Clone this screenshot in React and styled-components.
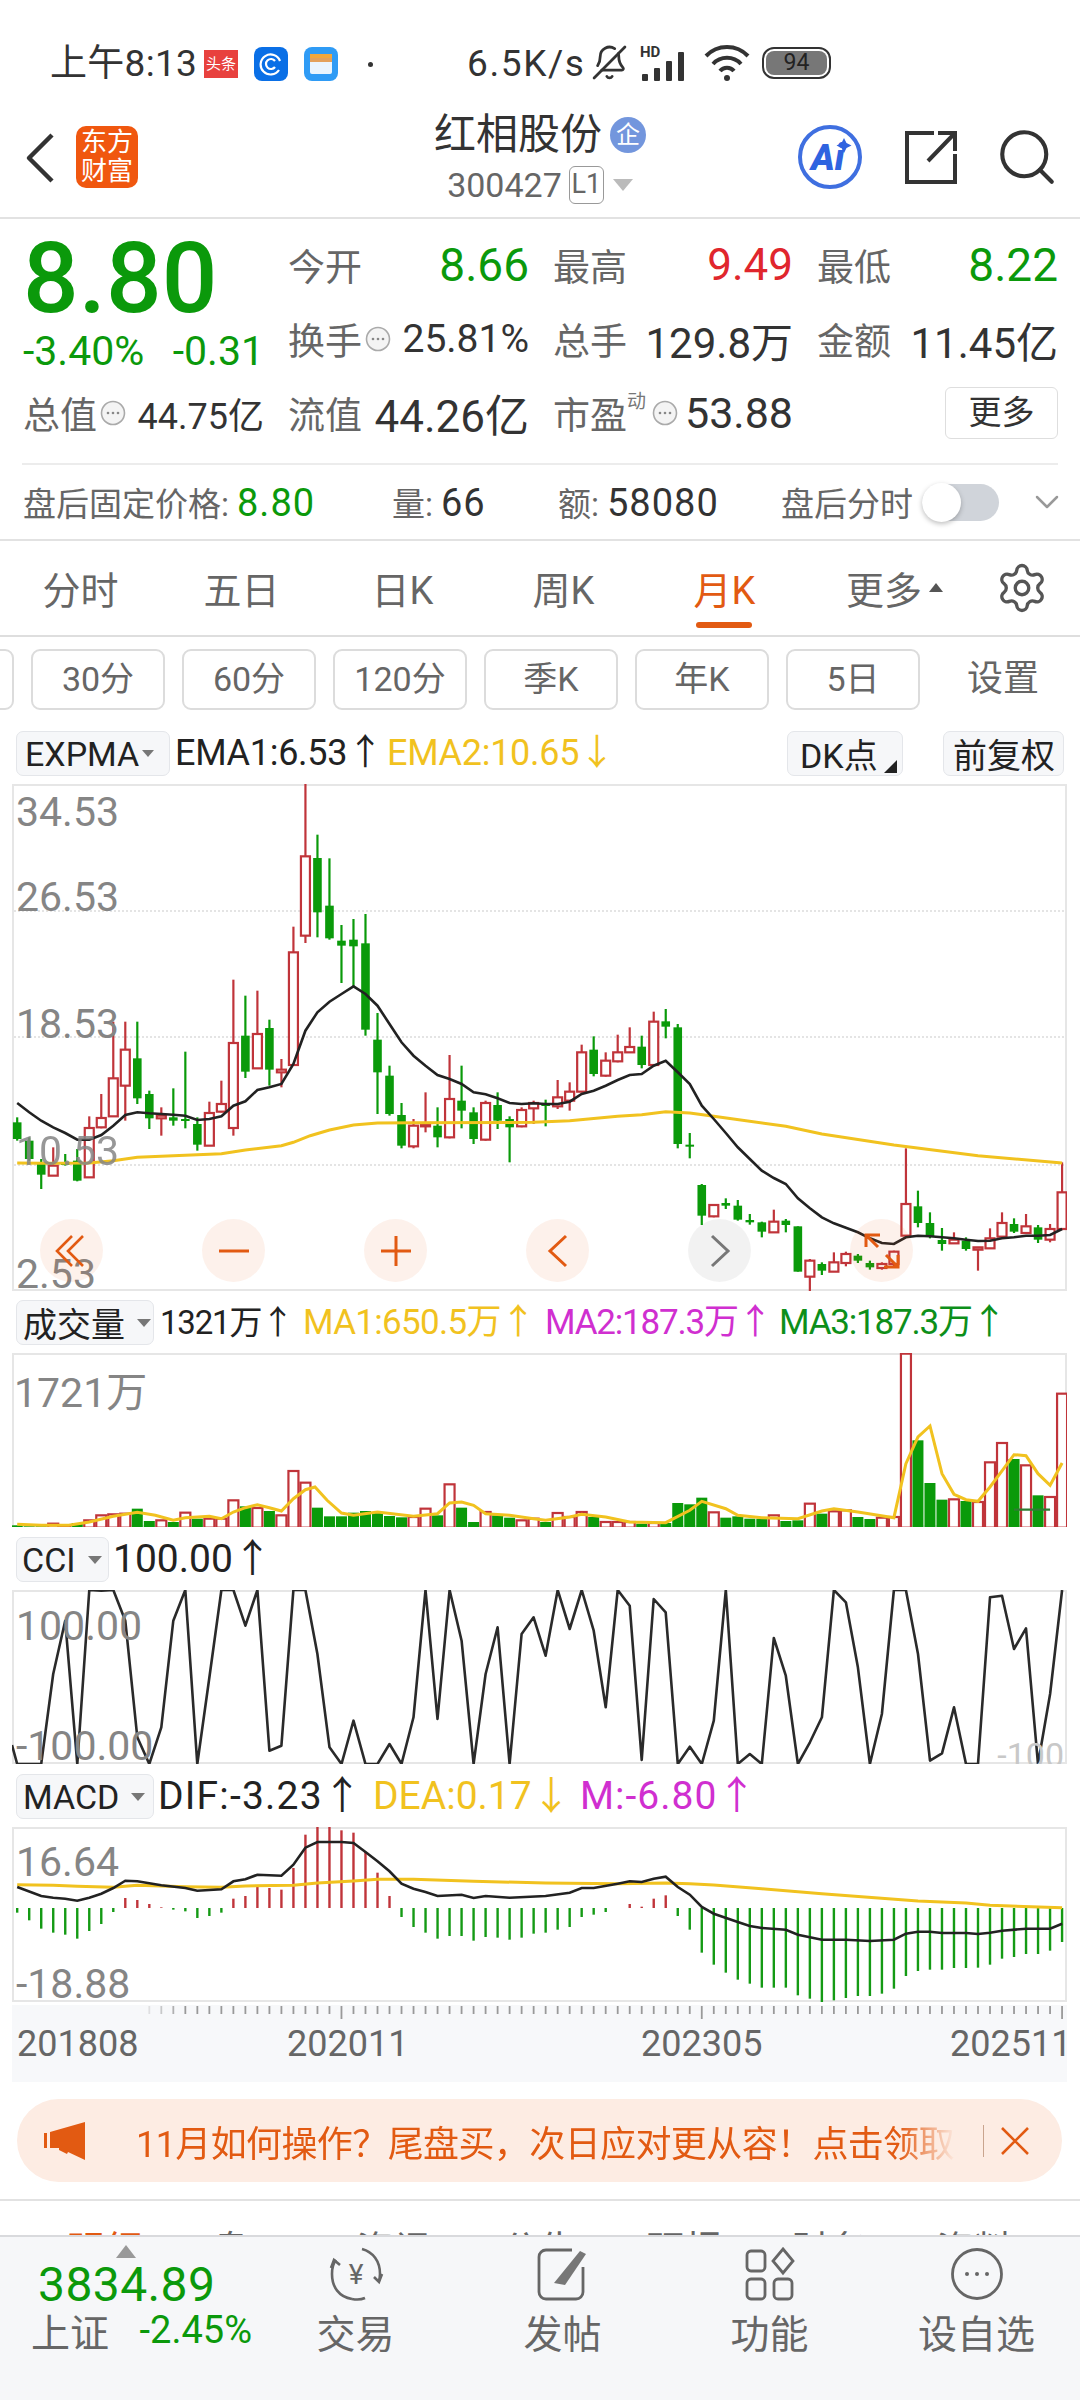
import React from 'react';
import styled, { createGlobalStyle } from 'styled-components';
import { BellOff, Search, Settings, ChevronDown } from 'lucide-react';

const sans = `Roboto, "Noto Sans CJK SC", sans-serif`;
const GREEN = '#0b990b';
const RED = '#e0262d';
const ORANGE = '#e25a12';
const CANDLE_RED = '#c0343a';
const CANDLE_GREEN = '#0a9a0a';
const YELLOW = '#f1c21f';
const MAGENTA = '#d02fd0';

const PROMO_TEXT = '11月如何操作\uFF1F尾盘买\uFF0C次日应对更从容\uFF01点击领取';

// series are sampled on a 3x grid, so every y below is three times a pixel
const slotX = (i) => 5.2 + 12.01 * i;
const toY = (top) => (v) => (v - top) / 3;
const linePoints = (values, top) =>
    values.map((v, i) => `${slotX(i).toFixed(1)},${toY(top)(v).toFixed(1)}`).join(' ');
const pairPoints = (pairs, top) =>
    pairs.map(([i, v]) => `${slotX(i).toFixed(1)},${toY(top)(v).toFixed(1)}`).join(' ');

// colour, wick top, body top, body bottom, wick bottom
const candles = [
    ['g', 1015, 1030, 1080, 1085], ['g', 1075, 1085, 1140, 1145], ['g', 1140, 1150, 1187, 1230], ['r', 1105, 1160, 1190, 1190],
    ['g', 1125, 1150, 1158, 1160], ['g', 1110, 1145, 1205, 1207], ['r', 1012, 1047, 1195, 1195], ['r', 945, 1017, 1045, 1048],
    ['r', 728, 898, 1012, 1013], ['r', 728, 812, 920, 1025], ['g', 728, 838, 958, 975], ['g', 935, 945, 1018, 1050],
    ['r', 985, 1010, 1018, 1070], ['g', 928, 1015, 1025, 1040], ['g', 818, 1020, 1026, 1048], ['g', 1015, 1035, 1097, 1115],
    ['r', 968, 1002, 1100, 1100], ['r', 905, 975, 998, 1000], ['r', 602, 792, 1047, 1070], ['g', 650, 770, 878, 897],
    ['r', 635, 765, 868, 870], ['g', 722, 747, 872, 920], ['r', 840, 872, 880, 925], ['r', 443, 520, 858, 860],
    ['r', 15, 232, 470, 492], ['g', 167, 237, 400, 475], ['g', 238, 380, 478, 482], ['g', 438, 485, 500, 612],
    ['g', 420, 482, 502, 622], ['g', 405, 493, 752, 770], ['g', 702, 782, 880, 1005], ['g', 860, 890, 1005, 1010],
    ['g', 972, 1008, 1100, 1108], ['r', 1020, 1040, 1102, 1108], ['r', 940, 1037, 1042, 1060], ['g', 985, 1040, 1075, 1105],
    ['r', 828, 960, 1075, 1078], ['g', 860, 965, 995, 1048], ['g', 985, 1000, 1080, 1095], ['r', 965, 972, 1082, 1085],
    ['g', 940, 978, 1025, 1050], ['g', 1012, 1020, 1045, 1150], ['r', 985, 993, 1042, 1045], ['r', 965, 972, 988, 1035],
    ['g', 962, 975, 980, 1042], ['r', 903, 955, 982, 990], ['r', 910, 938, 965, 995], ['r', 797, 820, 938, 940],
    ['g', 772, 812, 885, 892], ['r', 820, 845, 890, 893], ['r', 767, 820, 847, 850], ['r', 745, 804, 820, 822],
    ['g', 770, 803, 858, 868], ['r', 698, 728, 858, 860], ['g', 690, 727, 743, 778], ['g', 735, 745, 1095, 1108],
    ['g', 1062, 1097, 1103, 1138], ['g', 1215, 1218, 1310, 1338], ['r', 1275, 1278, 1312, 1315], ['g', 1258, 1272, 1280, 1290],
    ['g', 1263, 1280, 1322, 1325], ['g', 1305, 1323, 1330, 1337], ['g', 1328, 1330, 1358, 1375], ['r', 1292, 1328, 1360, 1360],
    ['g', 1320, 1325, 1338, 1360], ['g', 1342, 1342, 1478, 1478], ['r', 1440, 1445, 1493, 1538], ['g', 1450, 1455, 1475, 1488],
    ['r', 1420, 1450, 1478, 1478], ['r', 1418, 1425, 1452, 1462], ['g', 1425, 1430, 1445, 1452], ['g', 1445, 1452, 1465, 1472],
    ['r', 1450, 1455, 1467, 1472], ['r', 1415, 1418, 1455, 1465], ['r', 1108, 1275, 1370, 1370], ['g', 1235, 1282, 1332, 1345],
    ['g', 1300, 1332, 1372, 1378], ['g', 1347, 1383, 1395, 1415], ['r', 1360, 1382, 1393, 1395], ['g', 1375, 1385, 1410, 1415],
    ['r', 1405, 1405, 1412, 1475], ['r', 1348, 1378, 1408, 1408], ['r', 1300, 1332, 1373, 1375], ['g', 1318, 1335, 1358, 1362],
    ['r', 1305, 1342, 1362, 1362], ['g', 1338, 1345, 1382, 1392], ['r', 1335, 1350, 1382, 1390], ['r', 1150, 1240, 1350, 1350],
];

const ema1 = [
    972, 1000, 1025, 1045, 1062, 1082, 1082, 1068, 1040, 1008, 1000, 1003, 1005, 1007, 1010, 1023, 1020, 1012, 980, 967, 933, 925,
    915, 855, 755, 700, 668, 645, 622, 645, 680, 735, 790, 830, 860, 888, 900, 915, 940, 946, 958, 972, 975, 973,
    975, 975, 968, 945, 935, 920, 903, 888, 885, 860, 845, 880, 915, 980, 1020, 1062, 1105, 1140, 1175, 1197, 1215, 1258,
    1288, 1315, 1333, 1346, 1360, 1378, 1392, 1395, 1375, 1370, 1372, 1375, 1378, 1382, 1386, 1385, 1378, 1375, 1370, 1370, 1368, 1350,
];

const ema2 = [
    [0, 1152], [2, 1153], [6, 1152], [8, 1145], [10, 1135], [13, 1130], [17, 1124], [19, 1113], [22, 1100], [23, 1090], [24.4, 1070],
    [26, 1053], [28, 1038], [30, 1032], [33, 1031], [43, 1030], [46, 1025], [50, 1012], [52, 1007], [54, 998], [56, 1002], [58, 1012],
    [64, 1042], [67, 1065], [73, 1098], [80, 1130], [87, 1152],
];

const volumes = [
    ['g', 675], ['g', 678], ['g', 678], ['r', 670], ['r', 678], ['g', 668], ['r', 660], ['r', 645], ['r', 642], ['r', 640], ['g', 625],
    ['g', 662], ['r', 660], ['g', 665], ['r', 637], ['g', 655], ['r', 655], ['r', 655], ['r', 600], ['g', 618], ['r', 623], ['g', 632],
    ['r', 645], ['r', 512], ['r', 547], ['g', 622], ['g', 648], ['g', 648], ['g', 637], ['g', 632], ['g', 638], ['g', 647], ['g', 651],
    ['r', 650], ['r', 625], ['g', 645], ['r', 552], ['g', 622], ['g', 665], ['r', 635], ['g', 645], ['g', 652], ['r', 660], ['r', 655],
    ['g', 665], ['r', 638], ['r', 650], ['r', 635], ['g', 650], ['r', 665], ['r', 665], ['r', 665], ['g', 670], ['r', 668], ['g', 668],
    ['g', 608], ['g', 612], ['g', 592], ['r', 636], ['g', 652], ['g', 648], ['g', 655], ['g', 655], ['r', 645], ['g', 662], ['g', 660],
    ['r', 610], ['g', 640], ['r', 633], ['r', 630], ['g', 650], ['g', 656], ['r', 652], ['r', 650], ['r', 160], ['g', 420], ['g', 548],
    ['g', 598], ['r', 597], ['g', 602], ['r', 605], ['r', 486], ['r', 428], ['g', 476], ['r', 495], ['g', 585], ['r', 590], ['r', 280],
];

const volumeAverage = [
    [0, 672], [2, 675], [4.3, 675], [6, 665], [8, 648], [10, 636], [11.5, 645], [13, 660], [14, 652], [16, 648], [17, 655], [18, 635],
    [19, 622], [20, 613], [21, 622], [22, 632], [23, 595], [24, 568], [24.8, 560], [25.8, 600], [27, 638], [28, 645], [30, 635], [33, 648],
    [35, 640], [36, 608], [37, 605], [38, 615], [39, 640], [41, 645], [43, 655], [44, 660], [46, 650], [47, 642], [49, 650], [51, 665],
    [54, 667], [56, 630], [57, 603], [59, 625], [60, 645], [62, 652], [65, 655], [67, 632], [68, 625], [70, 635], [73, 652], [74, 490],
    [75, 410], [76, 377], [77, 520], [78, 582], [79, 598], [80, 603], [81, 560], [83, 463], [84, 466], [85, 520], [86, 555], [87, 488],
];

const cci = [
    1390, 1390, 1390, 1120, 960, 1390, 868, 870, 868, 960, 1310, 1390, 1280, 960, 868, 1390, 1130, 868, 868, 975, 868, 1350, 1335, 868,
    868, 1060, 1340, 1390, 1260, 1390, 1390, 1330, 1390, 1250, 868, 1255, 868, 1020, 1390, 1120, 980, 1390, 1000, 950,
    1065, 868, 985, 868, 990, 1220, 868, 915, 1378, 895, 935, 1390, 1338, 1390, 1260, 868, 1390, 1360, 1390, 1012, 1125, 1390, 1325,
    1250, 868, 905, 1100, 1390, 1240, 868, 868, 1060, 1380, 1358, 1220, 1390, 1390, 890, 885, 1045, 983, 1390, 1180, 868,
];

const macdBars = [
    392, 415, 440, 452, 458, 470, 447, 426, 390, 348, 354, 366, 376, 383, 388, 408, 402, 392, 350, 342, 315, 318, 323, 258, 158, 135,
    135, 145, 152, 210, 272, 342, 405, 435, 452, 470, 462, 462, 476, 465, 467, 473, 467, 455,
    452, 443, 435, 405, 398, 390, 378, 366, 374, 350, 340, 402, 443, 512, 548, 572, 593, 605, 617, 617, 617, 640, 650, 660, 655, 648,
    642, 642, 635, 620, 582, 567, 563, 563, 558, 558, 557, 548, 530, 525, 516, 516, 506, 480,
];

const dif = [
    [0, 315], [2, 342], [3, 347], [4, 350], [5, 356], [6, 347], [7, 335], [8, 318], [9, 296], [10, 298], [12, 310], [14, 318], [15, 326],
    [17, 322], [18, 298], [19, 292], [20, 278], [21, 280], [22, 281], [23, 248], [24, 197], [25, 180], [27, 180], [28, 183], [29, 210],
    [30, 238], [31, 268], [32, 305], [33, 320], [34, 330], [35, 342], [37, 338], [38, 348], [39, 342], [41, 347], [44, 342], [46, 332],
    [47, 318], [48, 318], [50, 305], [51, 298], [52, 300], [53, 290], [54, 284], [55, 315], [56, 338], [57, 375], [58, 395], [60, 420],
    [61, 432], [62, 438], [64, 443], [65, 458], [67, 473], [69, 473], [71, 477], [73, 473], [74, 455], [75, 449], [76, 449], [77, 453],
    [79, 453], [80, 456], [81, 452], [82, 446], [84, 440], [86, 440], [87, 425],
];

const dea = [
    [0, 308], [3, 310], [5, 313], [8, 316], [10, 310], [14, 314], [17, 316], [19, 312], [23, 310], [25, 303], [28, 297], [30, 292], [33, 292],
    [38, 298], [44, 303], [50, 305], [54, 303], [56, 305], [58, 309], [62, 320], [67, 335], [75, 357], [79, 363], [81, 370], [87, 377],
];

const GlobalStyle = createGlobalStyle`
    html, body { margin: 0; padding: 0; background: #fff; }
    * { box-sizing: border-box; }
`;

const Page = styled.div`
    width: 1080px;
    height: 2400px;
    display: flex;
    flex-direction: column;
    overflow: hidden;
    background: #fff;
    font-family: ${sans};
    color: #222;
`;

const Main = styled.div`
    height: 2235px;
    flex: none;
    overflow: hidden;
`;

const StatusBar = styled.div`
    height: 100px;
    padding: 44px 0 0 50px;
    display: flex;
    align-items: flex-start;
    color: #333;
`;

const StatusText = styled.span`
    font-size: 37px;
    line-height: 40px;
    white-space: nowrap;
    letter-spacing: ${(p) => p.$spacing || 0}px;
    width: ${(p) => p.$width}px;
    flex: none;
`;

const NewsBadge = styled.span`
    width: 34px;
    height: 28px;
    margin: 6px 16px 0 7px;
    background: #e8413e;
    color: #fff;
    font-size: 15px;
    line-height: 28px;
    text-align: center;
    flex: none;
`;

const AppTile = styled.span`
    width: 34px;
    height: 34px;
    margin: 3px ${(p) => p.$after}px 0 0;
    border-radius: 8px;
    background: ${(p) => p.$bg};
    flex: none;
    display: flex;
    align-items: center;
    justify-content: center;
`;

const StatusDot = styled.span`
    width: 5px;
    height: 5px;
    margin: 18px 94px 0 0;
    border-radius: 50%;
    background: #333;
    flex: none;
`;

const MirroredBell = styled(BellOff)`
    flex: none;
    transform: scaleX(-1);
`;

const Battery = styled.span`
    width: 69px;
    height: 32px;
    margin: 3px 0 0 12px;
    border: 2px solid #333;
    border-radius: 12px;
    padding: 2px;
    display: flex;
    flex: none;
`;

const BatteryLevel = styled.span`
    flex: 1;
    border-radius: 8px;
    background: #777;
    color: #222;
    font-size: 23px;
    line-height: 24px;
    text-align: center;
`;

const Header = styled.div`
    height: 119px;
    display: grid;
    grid-template-columns: 1fr auto 1fr;
    border-bottom: 2px solid #e2e2e2;
`;

const HeaderLeft = styled.div`
    display: flex;
    align-items: flex-start;
    padding: 26px 0 0 25px;
    gap: 21px;
`;

const Logo = styled.div`
    width: 62px;
    height: 62px;
    border-radius: 10px;
    background: #f0570f;
    color: #fff;
    font-size: 26px;
    line-height: 29px;
    text-align: center;
    padding-top: 2px;
`;

const TitleBlock = styled.div`
    display: flex;
    flex-direction: column;
    align-items: center;
    padding-top: 12px;
`;

const TitleRow = styled.div`
    display: flex;
    align-items: center;
    gap: 8px;
`;

const Title = styled.div`
    font-size: 42px;
    line-height: 46px;
    color: #333;
`;

const FirmBadge = styled.span`
    width: 36px;
    height: 36px;
    border-radius: 50%;
    background: #7396dd;
    color: #fff;
    font-size: 24px;
    line-height: 36px;
    text-align: center;
`;

const CodeRow = styled.div`
    display: flex;
    align-items: center;
    margin-top: 8px;
    color: #666;
    font-size: 34px;
    line-height: 38px;
`;

const LevelTag = styled.span`
    height: 38px;
    width: 35px;
    margin-left: 7px;
    border: 1.5px solid #999;
    border-radius: 6px;
    font-size: 27px;
    line-height: 35px;
    text-align: center;
`;

const Caret = styled.span`
    width: 0;
    height: 0;
    border-left: ${(p) => p.$size}px solid transparent;
    border-right: ${(p) => p.$size}px solid transparent;
    border-top: ${(p) => p.$size * 1.2}px solid ${(p) => p.$color};
    margin-left: ${(p) => p.$gap}px;
    flex: none;
`;

const CaretUp = styled(Caret)`
    border-top: 0;
    border-bottom: ${(p) => p.$size * 1.3}px solid ${(p) => p.$color};
`;

const HeaderRight = styled.div`
    display: flex;
    justify-content: flex-end;
    align-items: center;
    padding: 0 20px 4px 0;
    gap: 43px;
`;

const SearchIcon = styled(Search)`
    margin-left: -6px;
`;

const QuoteGrid = styled.div`
    padding: 9px 22px 0 23px;
    display: grid;
    grid-template-columns: 241px 241px 240px 241px;
    grid-auto-rows: 74px;
    column-gap: 24px;
`;

const PriceCell = styled.div`
    font-size: 98px;
    line-height: 98px;
    color: ${GREEN};
    font-weight: 500;
    align-self: start;
    margin-top: 2px;
    white-space: nowrap;
`;

const ChangeCell = styled.div`
    display: flex;
    justify-content: space-between;
    align-items: center;
    font-size: 41px;
    color: ${GREEN};
    padding-top: 24px;
`;

const Stat = styled.div`
    display: flex;
    align-items: center;
`;

const StatLabel = styled.span`
    font-size: 37px;
    color: #666;
    flex: none;
`;

const StatValue = styled.span`
    margin-left: auto;
    font-size: ${(p) => p.$size || 46}px;
    color: ${(p) => p.$color || '#333'};
    white-space: nowrap;
`;

const Superscript = styled.span`
    font-size: 19px;
    color: #777;
    align-self: flex-start;
    margin-top: 10px;
    width: 22px;
    flex: none;
`;

const MoreButton = styled.div`
    justify-self: end;
    align-self: center;
    width: 113px;
    height: 52px;
    border: 1px solid #dedede;
    border-radius: 6px;
    font-size: 33px;
    line-height: 50px;
    text-align: center;
    color: #333;
`;

const ThinRule = styled.div`
    margin: 13px 22px 0;
    height: 2px;
    background: #ececec;
`;

const AfterHours = styled.div`
    height: 76px;
    padding-left: 23px;
    display: grid;
    grid-template-columns: 369px 166px 223px 141px 105px auto;
    align-items: center;
    border-bottom: 2px solid #e2e2e2;
    font-size: 33px;
    color: #666;
`;

const AfterValue = styled.span`
    color: ${(p) => p.$color || '#333'};
    font-size: 38px;
    letter-spacing: 1px;
    margin-left: 8px;
`;

const NoWrap = styled.span`
    white-space: nowrap;
`;

const Toggle = styled.div`
    width: 77px;
    height: 37px;
    border-radius: 19px;
    background: #d0d4da;
    position: relative;
`;

const ToggleKnob = styled.div`
    position: absolute;
    left: 0;
    top: -1px;
    width: 39px;
    height: 39px;
    border-radius: 50%;
    background: #fff;
    box-shadow: 0 2px 5px rgba(0, 0, 0, 0.25);
`;

const TabBar = styled.div`
    height: 96px;
    display: grid;
    grid-template-columns: repeat(6, 161px) auto;
    align-items: center;
    border-bottom: 2px solid #dedede;
`;

const Tab = styled.div`
    position: relative;
    height: 94px;
    display: flex;
    align-items: center;
    justify-content: center;
    font-size: 38px;
    padding-bottom: 2px;
    padding-left: ${(p) => p.$shift || 0}px;
    color: ${(p) => (p.$active ? ORANGE : '#666')};

    ${(p) => p.$active && `
        &::after {
            content: '';
            position: absolute;
            left: 52px;
            bottom: 7px;
            width: 56px;
            height: 6px;
            border-radius: 3px;
            background: ${ORANGE};
        }
    `}
`;

const GearIcon = styled(Settings)`
    margin-left: 29px;
`;

const IntervalRow = styled.div`
    margin: 12px 0 0 -120px;
    height: 61px;
    display: flex;
    gap: 17px;
`;

const IntervalButton = styled.div`
    width: 134px;
    height: 61px;
    flex: none;
    border: 2px solid #dcdcdc;
    border-radius: 9px;
    font-size: 34px;
    line-height: 57px;
    text-align: center;
    color: #666;
`;

const IntervalLink = styled.div`
    font-size: 36px;
    line-height: 61px;
    color: #666;
    margin-left: 30px;
    white-space: nowrap;
`;

const IndicatorRow = styled.div`
    height: 45px;
    margin: ${(p) => p.$top}px 0 8px;
    padding-left: 16px;
    display: flex;
    align-items: center;
    white-space: nowrap;
`;

const Selector = styled.div`
    width: ${(p) => p.$width}px;
    height: 45px;
    flex: none;
    display: flex;
    align-items: center;
    padding-left: ${(p) => p.$inset || 8}px;
    background: #f6f7f9;
    border: 1px solid #e4e6ea;
    border-radius: 7px;
    font-size: 34px;
    color: #222;
`;

const Reading = styled.span`
    flex: none;
    width: ${(p) => (p.$width ? `${p.$width}px` : 'auto')};
    font-size: ${(p) => p.$size}px;
    letter-spacing: ${(p) => p.$spacing || 0}px;
    line-height: 45px;
    color: ${(p) => p.$color || '#222'};
    margin-left: ${(p) => p.$gap || 0}px;
`;

const RowPush = styled.div`
    margin-left: auto;
    display: flex;
    gap: 40px;
    padding-right: 16px;
`;

const SmallCorner = styled.span`
    width: 0;
    height: 0;
    margin: 26px 0 0 6px;
    border-left: 13px solid transparent;
    border-bottom: 13px solid #222;
`;

const ChartFrame = styled.div`
    position: relative;
    margin-left: 12px;
    width: 1055px;
    height: ${(p) => p.$height}px;
    box-shadow: inset 0 0 0 2px #e6e6e6;

    svg { display: block; }
`;

const ScaleLabel = styled.text`
    font-family: ${sans};
    font-size: ${(p) => p.$size || 41}px;
    fill: ${(p) => p.$fill || '#858585'};
    dominant-baseline: central;
`;

const ZoomControls = styled.div`
    position: absolute;
    left: 28px;
    top: 435px;
    display: flex;
    gap: 99px;
`;

const ZoomButton = styled.div`
    width: 63px;
    height: 63px;
    border-radius: 50%;
    background: ${(p) => (p.$muted ? 'rgba(0, 0, 0, 0.05)' : 'rgba(236, 100, 30, 0.09)')};
    display: flex;
    align-items: center;
    justify-content: center;
`;

const AxisStrip = styled.div`
    margin: 3px 0 0 12px;
    width: 1055px;
    height: 77px;
    background: #f7f8fa;

    svg { display: block; }
`;

const AxisLabels = styled.div`
    margin-top: 1px;
    padding-left: 5px;
    display: grid;
    grid-template-columns: 270px 354px 309px auto;
    font-size: 36px;
    line-height: 44px;
    color: #666;
`;

const Banner = styled.div`
    margin: 17px 18px 0 17px;
    height: 83px;
    border-radius: 42px;
    background: #fdece3;
    display: flex;
    align-items: center;
    padding-left: 27px;
    color: ${ORANGE};
`;

const BannerText = styled.div`
    width: 820px;
    margin-left: 50px;
    flex: none;
    overflow: hidden;
    white-space: nowrap;
    font-size: 36px;
    letter-spacing: -0.6px;
    -webkit-mask-image: linear-gradient(to right, #000 93%, transparent);
    mask-image: linear-gradient(to right, #000 93%, transparent);
`;

const BannerDivider = styled.div`
    width: 1px;
    height: 32px;
    margin: 0 16px 0 27px;
    background: #c9a48e;
    flex: none;
`;

const LowerTabs = styled.div`
    margin-top: 17px;
    border-top: 2px solid #e2e2e2;
    padding: 27px 0 0 32px;
    display: grid;
    grid-template-columns: repeat(7, 145px);
`;

const LowerTab = styled.div`
    font-size: 38px;
    line-height: 44px;
    text-align: center;
    color: ${(p) => (p.$active ? ORANGE : '#666')};
`;

const BottomBar = styled.div`
    flex: 1;
    background: #f6f7f9;
    border-top: 2px solid #d9dadd;
    display: grid;
    grid-template-columns: 252px repeat(4, 207px);
`;

const IndexBlock = styled.div`
    padding: 8px 0 0 31px;
`;

const IndexCaret = styled(CaretUp)`
    display: block;
    margin-left: 85px;
`;

const IndexValue = styled.div`
    margin: 4px 0 0 7px;
    font-size: 48px;
    line-height: 46px;
    color: ${GREEN};
    letter-spacing: 0.4px;
`;

const IndexRow = styled.div`
    display: flex;
    align-items: center;
    height: 44px;
`;

const IndexName = styled.span`
    font-size: 39px;
    color: #666;
    width: 109px;
`;

const IndexChange = styled.span`
    font-size: 38px;
    color: ${GREEN};
`;

const BarItem = styled.div`
    display: flex;
    flex-direction: column;
    align-items: center;
    padding-top: 10px;
`;

const BarLabel = styled.span`
    margin-top: 13px;
    font-size: 39px;
    line-height: 42px;
    color: #666;
`;

const DotsGlyph = styled.svg`
    margin-left: 3px;
    flex: none;
`;

const Dots = () => (
    <DotsGlyph width="26" height="26" viewBox="0 0 26 26">
        <circle cx="13" cy="13" r="11.5" fill="#f4f4f4" stroke="#aaa" strokeWidth="1.6" />
        <circle cx="8" cy="13" r="1.3" fill="#888" />
        <circle cx="13" cy="13" r="1.3" fill="#888" />
        <circle cx="18" cy="13" r="1.3" fill="#888" />
    </DotsGlyph>
);

const BackGlyph = styled.svg`
    margin-top: 7px;
`;

const BackIcon = () => (
    <BackGlyph width="30" height="50" viewBox="0 0 30 50">
        <polyline points="27,2 4,25 27,48" fill="none" stroke="#333" strokeWidth="4.5" strokeLinejoin="round" />
    </BackGlyph>
);

const AiIcon = () => (
    <svg width="64" height="66" viewBox="0 0 64 66">
        <circle cx="32" cy="33" r="30" fill="#fff" stroke="#3f6fe0" strokeWidth="4" />
        <text x="13" y="46" fontFamily="Roboto, sans-serif" fontWeight="900" fontStyle="italic" fontSize="36" fill="#2f63e0">Ai</text>
        <path d="M46 14l2.5 5 5 2.5-5 2.5-2.5 5-2.5-5-5-2.5 5-2.5z" fill="#2f63e0" />
    </svg>
);

const ShareIcon = () => (
    <svg width="52" height="54" viewBox="0 0 52 54" fill="none" stroke="#333" strokeWidth="4">
        <path d="M29 3H2v49h48V24" />
        <path d="M23 31L50 3M33 3h17v18" />
    </svg>
);

const Megaphone = () => (
    <svg width="42" height="38" viewBox="0 0 42 38">
        <rect x="0" y="11" width="3" height="15" fill={ORANGE} />
        <path d="M6 10L41 0v38L24 30l-1 2-8-4v-2H6z" fill={ORANGE} />
    </svg>
);

const TradeIcon = () => (
    <svg width="60" height="54" viewBox="0 0 60 54" fill="none" stroke="#666" strokeWidth="2.6">
        <path d="M36 2C47 5 54 14 54 27c0 3-.5 6-1.6 8" />
        <path d="M26 52C13 50 6 40 6 27c0-6 1.5-11 4-14" />
        <path d="M5 21l3-8 6 5M56 27l-3 8-5-5" />
        <path d="M26 52c4 .8 9 .8 13-1" />
        <text x="30" y="37" textAnchor="middle" fontFamily="Roboto, sans-serif" fontSize="28" fill="#666" stroke="none">¥</text>
    </svg>
);

const PostIcon = () => (
    <svg width="54" height="54" viewBox="0 0 54 54" fill="none" stroke="#666" strokeWidth="2.8">
        <path d="M36 3H10a7 7 0 0 0-7 7v35a7 7 0 0 0 7 7h30a7 7 0 0 0 7-7V20" />
        <path d="M18 36L44 4l6 3-21 31z" fill="#777" stroke="none" />
    </svg>
);

const ToolsIcon = () => (
    <svg width="50" height="54" viewBox="0 0 50 54" fill="none" stroke="#666" strokeWidth="2.8">
        <rect x="2" y="4" width="18" height="20" rx="4" />
        <rect x="2" y="32" width="18" height="20" rx="4" />
        <rect x="29" y="32" width="18" height="20" rx="4" />
        <path d="M38 2l10 12-10 12-10-12z" />
    </svg>
);

const MoreIcon = () => (
    <svg width="54" height="54" viewBox="0 0 54 54" fill="none">
        <circle cx="27" cy="27" r="24.5" stroke="#666" strokeWidth="2.8" />
        <circle cx="17" cy="27" r="2" fill="#666" />
        <circle cx="27" cy="27" r="2" fill="#666" />
        <circle cx="37" cy="27" r="2" fill="#666" />
    </svg>
);

const Glyph = ({ color = ORANGE, children }) => (
    <svg width="36" height="36" viewBox="0 0 36 36" fill="none" stroke={color} strokeWidth="3">
        {children}
    </svg>
);

const zoomGlyphs = [
    <Glyph key="rewind"><path d="M18 3L3 18l15 15M29 3L14 18l15 15" strokeWidth="2.6" /></Glyph>,
    <Glyph key="minus"><path d="M3 18h30" /></Glyph>,
    <Glyph key="plus"><path d="M3 18h30M18 3v30" /></Glyph>,
    <Glyph key="prev"><path d="M26 3L10 18l16 15" /></Glyph>,
    <Glyph key="next" color="#777"><path d="M10 3l16 15-16 15" /></Glyph>,
    <Glyph key="expand"><path d="M2 14V2h14M2 2l12 12M34 22v12H20M34 34L22 22" /></Glyph>,
];

const PriceChart = () => {
    const y = toY(15);
    return (
        <svg width="1055" height="507" viewBox="0 0 1055 507">
            {[127, 253, 381].map((g) => (
                <line key={g} x1="2" x2="1053" y1={g} y2={g} stroke="#dcdcdc" strokeWidth="1.5" strokeDasharray="2 2" />
            ))}
            {candles.map(([c, wt, bt, bb, wb], i) => {
                const x = slotX(i);
                const stroke = c === 'r' ? CANDLE_RED : CANDLE_GREEN;
                return (
                    <g key={i}>
                        <line x1={x} x2={x} y1={y(wt)} y2={y(wb)} stroke={stroke} strokeWidth="2.2" />
                        {c === 'r' ? (
                            <rect x={x - 4.5} y={y(bt)} width="9" height={Math.max(y(bb) - y(bt), 1)} fill="#fff" stroke={stroke} strokeWidth="2.2" />
                        ) : (
                            <rect x={x - 4.3} y={y(bt)} width="8.6" height={Math.max(y(bb) - y(bt), 2)} fill={stroke} />
                        )}
                    </g>
                );
            })}
            <polyline points={pairPoints(ema2, 15)} fill="none" stroke={YELLOW} strokeWidth="3" />
            <polyline points={linePoints(ema1, 15)} fill="none" stroke="#222" strokeWidth="2.6" />
            <ScaleLabel x="4" y="28">34.53</ScaleLabel>
            <ScaleLabel x="4" y="113">26.53</ScaleLabel>
            <ScaleLabel x="4" y="240">18.53</ScaleLabel>
            <ScaleLabel x="4" y="367" opacity="0.85">10.53</ScaleLabel>
            <ScaleLabel x="4" y="490">2.53</ScaleLabel>
        </svg>
    );
};

const VolumeChart = () => {
    const y = toY(158);
    const base = y(682);
    return (
        <svg width="1055" height="174" viewBox="0 0 1055 174">
            {volumes.map(([c, top], i) => {
                const x = slotX(i);
                return c === 'r' ? (
                    <rect key={i} x={x - 5} y={y(top)} width="10" height={base - y(top)} fill="#fff" stroke={CANDLE_RED} strokeWidth="2.2" />
                ) : (
                    <rect key={i} x={x - 5.5} y={y(top)} width="11" height={base - y(top) + 1} fill={CANDLE_GREEN} />
                );
            })}
            <line x1={slotX(83)} x2={slotX(86)} y1={y(628)} y2={y(628)} stroke="#2e7d32" strokeWidth="2.4" />
            <polyline points={pairPoints(volumeAverage, 158)} fill="none" stroke={YELLOW} strokeWidth="3" />
            <ScaleLabel x="2" y="40">1721万</ScaleLabel>
        </svg>
    );
};

const CciChart = () => (
    <svg width="1055" height="174" viewBox="0 0 1055 174">
        <polyline points={`0,155 ${linePoints(cci, 868)}`} fill="none" stroke="#2a2a2a" strokeWidth="2.6" strokeLinejoin="round" />
        <ScaleLabel x="4" y="36">100.00</ScaleLabel>
        <ScaleLabel x="4" y="156">-100.00</ScaleLabel>
        <ScaleLabel x="1052" y="165" $size={34} $fill="#c8c8c8" textAnchor="end">-100</ScaleLabel>
    </svg>
);

const MacdChart = () => {
    const y = toY(135);
    const base = y(378);
    return (
        <svg width="1055" height="175" viewBox="0 0 1055 175">
            {macdBars.map((v, i) => (
                <line
                    key={i}
                    x1={slotX(i)}
                    x2={slotX(i)}
                    y1={base}
                    y2={y(v)}
                    stroke={v < 378 ? CANDLE_RED : '#149a14'}
                    strokeWidth="2.4"
                />
            ))}
            <polyline points={pairPoints(dea, 135)} fill="none" stroke={YELLOW} strokeWidth="3" />
            <polyline points={pairPoints(dif, 135)} fill="none" stroke="#222" strokeWidth="2.6" />
            <ScaleLabel x="4" y="35">16.64</ScaleLabel>
            <ScaleLabel x="4" y="157">-18.88</ScaleLabel>
        </svg>
    );
};

const AxisTicks = () => (
    <svg width="1055" height="16" viewBox="0 0 1055 16">
        {Array.from({ length: 77 }, (_, n) => {
            const i = n + 11;
            const major = i === 27 || i === 57 || i === 87;
            return (
                <line
                    key={i}
                    x1={slotX(i)}
                    x2={slotX(i)}
                    y1="1"
                    y2={major ? 14 : 9}
                    stroke="#999"
                    strokeWidth="1.8"
                    opacity={i < 14 ? 0.25 + (i - 11) * 0.25 : 1}
                />
            );
        })}
    </svg>
);

const App = () => {
    return (
        <Page>
            <GlobalStyle />
            <Main>
                <StatusBar>
                    <StatusText $width={147} $spacing={0.3}>上午8:13</StatusText>
                    <NewsBadge>头条</NewsBadge>
                    <AppTile $bg="#0a6fe6" $after={16}>
                        <svg width="24" height="24" viewBox="0 0 24 24" fill="none" stroke="#fff" strokeWidth="2.2">
                            <path d="M20 18a10 10 0 1 1 1-9" />
                            <path d="M16 15a5 5 0 1 1 0-6" />
                        </svg>
                    </AppTile>
                    <AppTile $bg="#2f9bf5" $after={30}>
                        <svg width="24" height="24" viewBox="0 0 24 24">
                            <rect x="1" y="2" width="22" height="20" rx="2" fill="#eaf4fd" />
                            <rect x="1" y="2" width="22" height="4" fill="#f3a73b" />
                            <rect x="1" y="6" width="22" height="4" fill="#e4a05a" />
                        </svg>
                    </AppTile>
                    <StatusDot />
                    <StatusText $width={124} $spacing={1.6}>6.5K/s</StatusText>
                    <MirroredBell size={37} color="#333" strokeWidth={1.8} />
                    <svg width="52" height="38" viewBox="0 0 52 38" style={{ marginLeft: 12, flex: 'none' }}>
                        <text x="0" y="13" fontFamily="Roboto, sans-serif" fontWeight="700" fontSize="15" fill="#333">HD</text>
                        <rect x="2" y="30" width="6" height="7" rx="1" fill="#333" />
                        <rect x="14" y="24" width="6" height="13" rx="1" fill="#333" />
                        <rect x="26" y="17" width="6" height="20" rx="1" fill="#333" />
                        <rect x="38" y="8" width="6" height="29" rx="1" fill="#333" />
                    </svg>
                    <svg width="46" height="38" viewBox="0 0 46 38" fill="none" stroke="#333" strokeWidth="4" style={{ marginLeft: 12, flex: 'none' }}>
                        <path d="M2 12a29 29 0 0 1 42 0" />
                        <path d="M9 20a19 19 0 0 1 28 0" />
                        <path d="M16 27a9 9 0 0 1 14 0" />
                        <circle cx="23" cy="34" r="3" fill="#333" stroke="none" />
                    </svg>
                    <Battery><BatteryLevel>94</BatteryLevel></Battery>
                </StatusBar>

                <Header>
                    <HeaderLeft>
                        <BackIcon />
                        <Logo>东方<br />财富</Logo>
                    </HeaderLeft>
                    <TitleBlock>
                        <TitleRow>
                            <Title>红相股份</Title>
                            <FirmBadge>企</FirmBadge>
                        </TitleRow>
                        <CodeRow>
                            300427
                            <LevelTag>L1</LevelTag>
                            <Caret $size={10} $color="#bbb" $gap={9} />
                        </CodeRow>
                    </TitleBlock>
                    <HeaderRight>
                        <AiIcon />
                        <ShareIcon />
                        <SearchIcon size={66} color="#333" strokeWidth={1.5} />
                    </HeaderRight>
                </Header>

                <QuoteGrid>
                    <PriceCell>8.80</PriceCell>
                    <Stat><StatLabel>今开</StatLabel><StatValue $color={GREEN}>8.66</StatValue></Stat>
                    <Stat><StatLabel>最高</StatLabel><StatValue $size={44} $color={RED}>9.49</StatValue></Stat>
                    <Stat><StatLabel>最低</StatLabel><StatValue $color={GREEN}>8.22</StatValue></Stat>

                    <ChangeCell><span>-3.40%</span><span>-0.31</span></ChangeCell>
                    <Stat><StatLabel>换手</StatLabel><Dots /><StatValue $size={39}>25.81%</StatValue></Stat>
                    <Stat><StatLabel>总手</StatLabel><StatValue $size={42}>129.8万</StatValue></Stat>
                    <Stat><StatLabel>金额</StatLabel><StatValue $size={42}>11.45亿</StatValue></Stat>

                    <Stat><StatLabel>总值</StatLabel><Dots /><StatValue $size={36}>44.75亿</StatValue></Stat>
                    <Stat><StatLabel>流值</StatLabel><StatValue $size={44}>44.26亿</StatValue></Stat>
                    <Stat><StatLabel>市盈</StatLabel><Superscript>动</Superscript><Dots /><StatValue $size={43}>53.88</StatValue></Stat>
                    <MoreButton>更多</MoreButton>
                </QuoteGrid>
                <ThinRule />

                <AfterHours>
                    <span>盘后固定价格:<AfterValue $color={GREEN}>8.80</AfterValue></span>
                    <span>量:<AfterValue>66</AfterValue></span>
                    <span>额:<AfterValue>58080</AfterValue></span>
                    <NoWrap>盘后分时</NoWrap>
                    <Toggle><ToggleKnob /></Toggle>
                    <ChevronDown size={40} color="#999" strokeWidth={1.5} />
                </AfterHours>

                <TabBar>
                    <Tab>分时</Tab>
                    <Tab>五日</Tab>
                    <Tab>日K</Tab>
                    <Tab>周K</Tab>
                    <Tab $active>月K</Tab>
                    <Tab $shift={18}>更多<CaretUp $size={7} $color="#555" $gap={7} /></Tab>
                    <GearIcon size={54} color="#555" strokeWidth={1.5} />
                </TabBar>

                <IntervalRow>
                    <IntervalButton />
                    <IntervalButton>30分</IntervalButton>
                    <IntervalButton>60分</IntervalButton>
                    <IntervalButton>120分</IntervalButton>
                    <IntervalButton>季K</IntervalButton>
                    <IntervalButton>年K</IntervalButton>
                    <IntervalButton>5日</IntervalButton>
                    <IntervalLink>设置</IntervalLink>
                </IntervalRow>

                <IndicatorRow $top={21}>
                    <Selector $width={154}>EXPMA<Caret $size={6} $color="#777" $gap={3} /></Selector>
                    <Reading $gap={5} $width={212} $size={36} $spacing={-0.3}>EMA1:6.53↑</Reading>
                    <Reading $size={36} $spacing={-0.3} $color={YELLOW}>EMA2:10.65↓</Reading>
                    <RowPush>
                        <Selector $width={116} $inset={12}>DK点<SmallCorner /></Selector>
                        <Selector $width={121} $inset={9}>前复权</Selector>
                    </RowPush>
                </IndicatorRow>
                <ChartFrame $height={507}>
                    <PriceChart />
                    <ZoomControls>
                        {zoomGlyphs.map((glyph, i) => (
                            <ZoomButton key={i} $muted={i === 4}>{glyph}</ZoomButton>
                        ))}
                    </ZoomControls>
                </ChartFrame>

                <IndicatorRow $top={9}>
                    <Selector $width={138} $inset={6}>成交量<Caret $size={7} $color="#777" $gap={12} /></Selector>
                    <Reading $gap={6} $width={143} $size={33} $spacing={-1.2}>1321万↑</Reading>
                    <Reading $width={242} $size={35} $spacing={-0.7} $color={YELLOW}>MA1:650.5万↑</Reading>
                    <Reading $width={234} $size={35} $spacing={-1.2} $color={MAGENTA}>MA2:187.3万↑</Reading>
                    <Reading $size={35} $spacing={-1.2} $color="#0d8f1a">MA3:187.3万↑</Reading>
                </IndicatorRow>
                <ChartFrame $height={174}><VolumeChart /></ChartFrame>

                <IndicatorRow $top={10}>
                    <Selector $width={93} $inset={5}>CCI<Caret $size={7} $color="#777" $gap={12} /></Selector>
                    <Reading $gap={4} $size={39}>100.00↑</Reading>
                </IndicatorRow>
                <ChartFrame $height={174}><CciChart /></ChartFrame>

                <IndicatorRow $top={10}>
                    <Selector $width={138} $inset={6}>MACD<Caret $size={7} $color="#777" $gap={12} /></Selector>
                    <Reading $gap={4} $width={215} $size={39} $spacing={1.2}>DIF:-3.23↑</Reading>
                    <Reading $width={207} $size={39} $color={YELLOW}>DEA:0.17↓</Reading>
                    <Reading $size={39} $spacing={1} $color={MAGENTA}>M:-6.80↑</Reading>
                </IndicatorRow>
                <ChartFrame $height={175}><MacdChart /></ChartFrame>

                <AxisStrip>
                    <AxisTicks />
                    <AxisLabels>
                        <span>201808</span>
                        <span>202011</span>
                        <span>202305</span>
                        <span>202511</span>
                    </AxisLabels>
                </AxisStrip>

                <Banner>
                    <Megaphone />
                    <BannerText>{PROMO_TEXT}</BannerText>
                    <BannerDivider />
                    <svg width="30" height="30" viewBox="0 0 30 30" fill="none" stroke={ORANGE} strokeWidth="2.6">
                        <path d="M2 2l26 26M28 2L2 28" />
                    </svg>
                </Banner>

                <LowerTabs>
                    <LowerTab $active>明细</LowerTab>
                    <LowerTab>盘口</LowerTab>
                    <LowerTab>资讯</LowerTab>
                    <LowerTab>公告</LowerTab>
                    <LowerTab>研报</LowerTab>
                    <LowerTab>财务</LowerTab>
                    <LowerTab>资料</LowerTab>
                </LowerTabs>
            </Main>

            <BottomBar>
                <IndexBlock>
                    <IndexCaret $size={10} $color="#999" $gap={85} />
                    <IndexValue>3834.89</IndexValue>
                    <IndexRow>
                        <IndexName>上证</IndexName>
                        <IndexChange>-2.45%</IndexChange>
                    </IndexRow>
                </IndexBlock>
                <BarItem><TradeIcon /><BarLabel>交易</BarLabel></BarItem>
                <BarItem><PostIcon /><BarLabel>发帖</BarLabel></BarItem>
                <BarItem><ToolsIcon /><BarLabel>功能</BarLabel></BarItem>
                <BarItem><MoreIcon /><BarLabel>设自选</BarLabel></BarItem>
            </BottomBar>
        </Page>
    );
};

export default App;
